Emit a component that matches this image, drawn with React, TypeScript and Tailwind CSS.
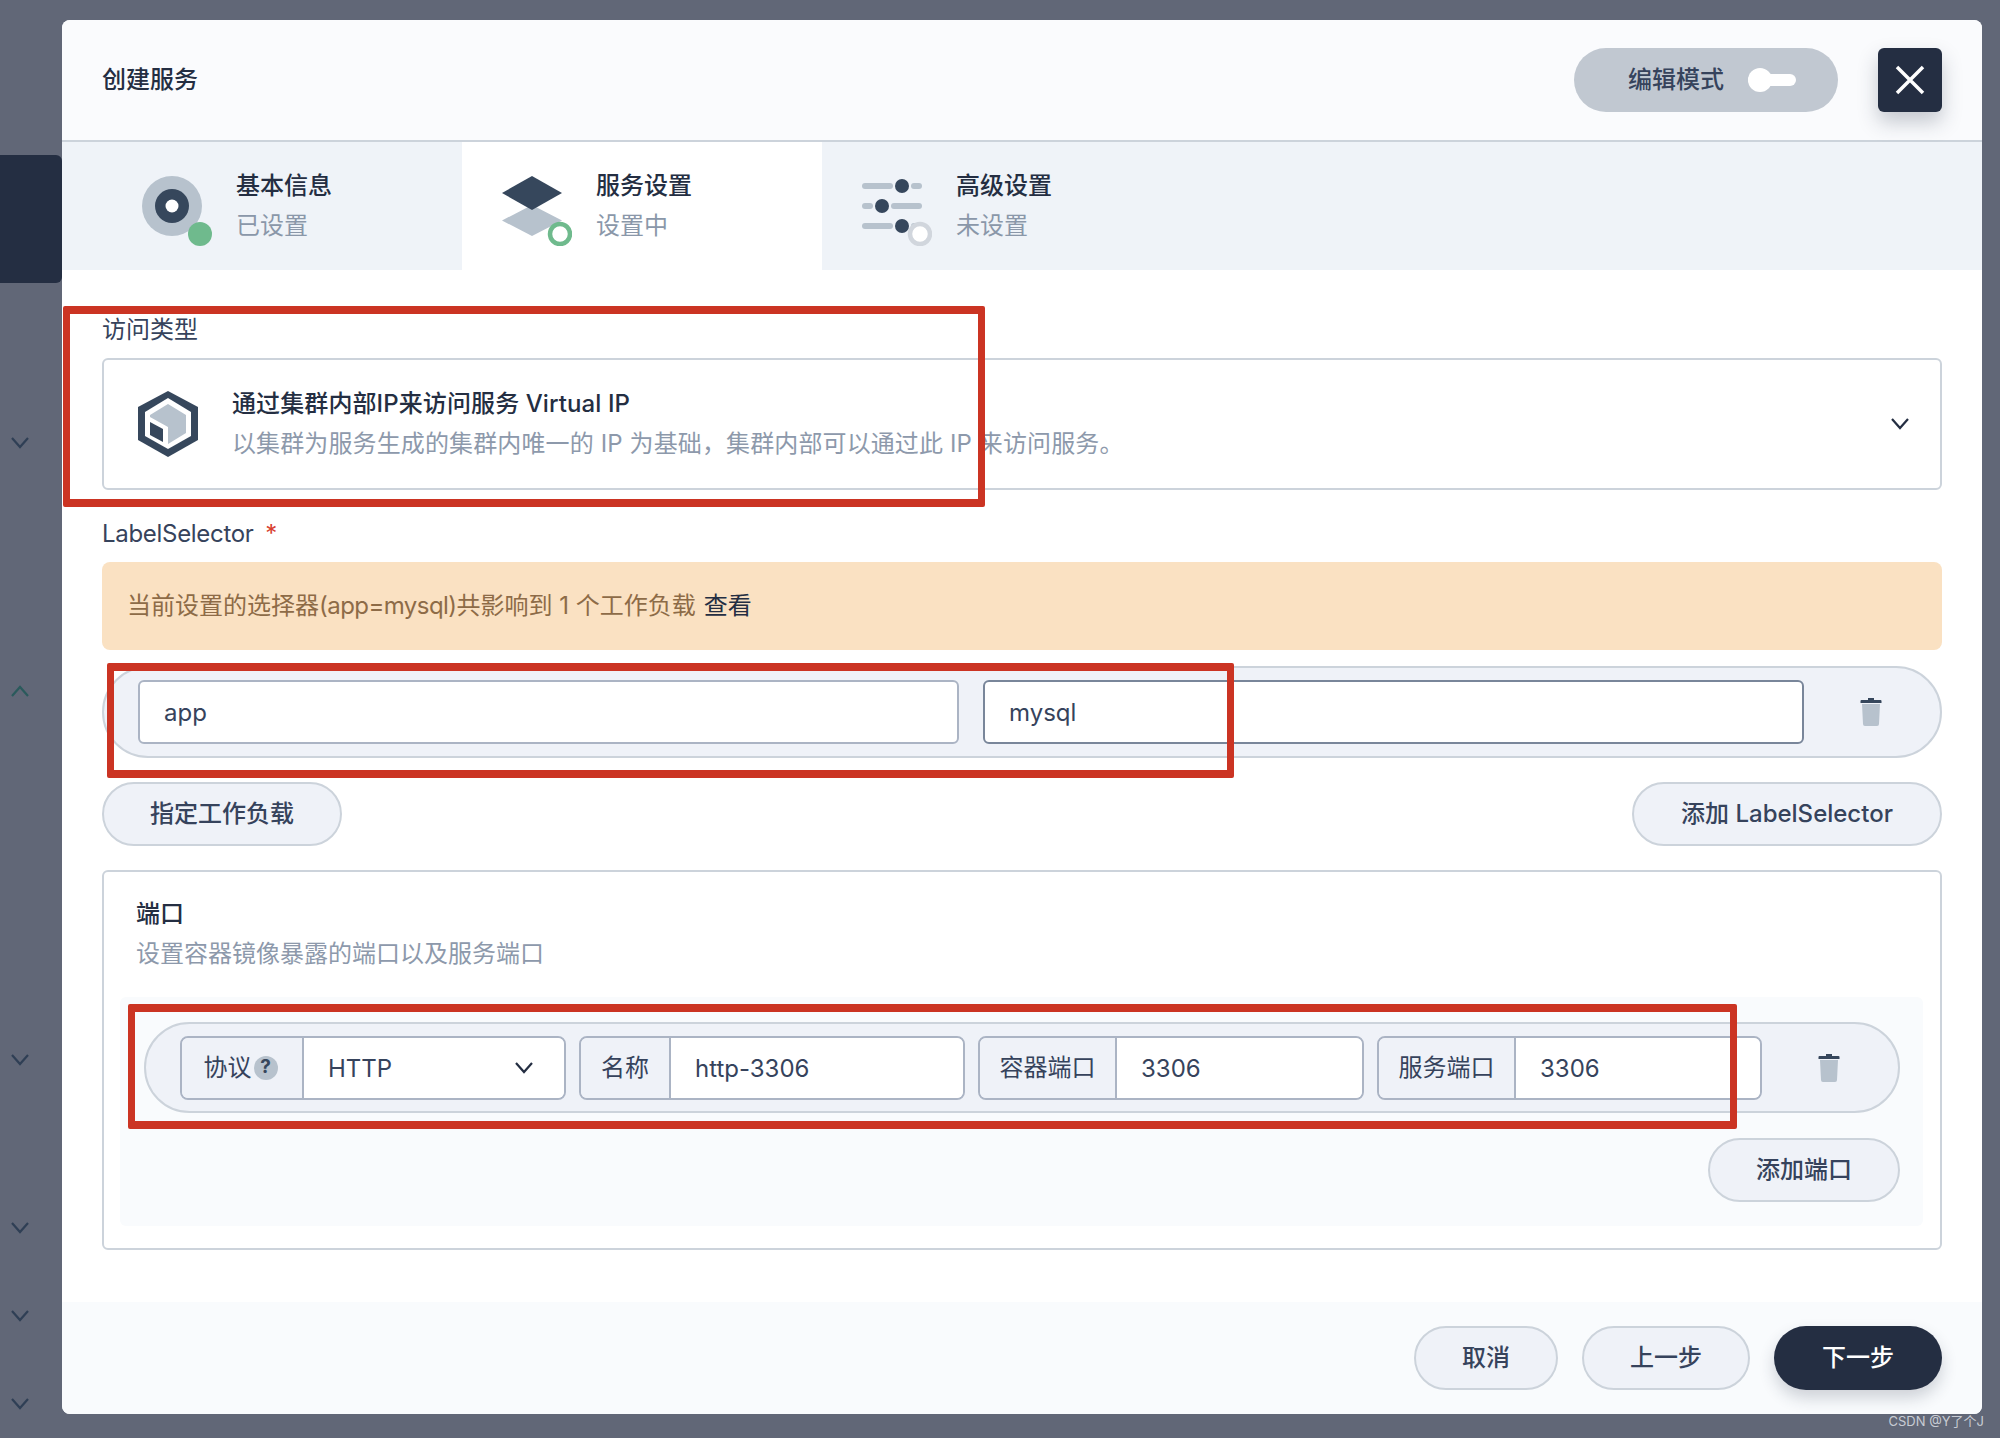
import React from "react";

const font = { fontFamily: '"Inter","Noto Sans CJK SC",sans-serif' };

function Chevron({ up = false, color = "#2f3f55", className = "" }: { up?: boolean; color?: string; className?: string }) {
  return (
    <svg width="20" height="12" viewBox="0 0 20 12" className={className} fill="none">
      <polyline points={up ? "2,11 10,2 18,11" : "2,1 10,10 18,1"} stroke={color} strokeWidth="2.2" />
    </svg>
  );
}

function Trash() {
  return (
    <svg width="24" height="28" viewBox="0 0 24 28">
      <path d="M9 0h6v2h6.5a1 1 0 0 1 1 1v2h-21V3a1 1 0 0 1 1-1H9z" fill="#36475c" />
      <path d="M3 6h18l-1 20a2 2 0 0 1-2 2H6a2 2 0 0 1-2-2z" fill="#b7c2cd" />
    </svg>
  );
}

function StepOne() {
  return (
    <svg width="70" height="70" viewBox="0 0 70 70" className="mr-[24px] mt-[10px] shrink-0">
      <circle cx="30" cy="30" r="30" fill="#b7c2cd" />
      <circle cx="30" cy="30" r="17" fill="#36475c" />
      <circle cx="30" cy="30" r="6.5" fill="#fff" />
      <circle cx="58" cy="58" r="12" fill="#6fba8d" />
    </svg>
  );
}

function StepTwo() {
  return (
    <svg width="70" height="70" viewBox="0 0 70 70" className="mr-[24px] mt-[10px] shrink-0">
      <polygon points="30,29 60,44.5 30,60 0,44.5" fill="#b7c2cd" />
      <polygon points="30,0 60,17 30,34 0,17" fill="#36475c" />
      <circle cx="58" cy="58" r="10" fill="#fff" stroke="#6fba8d" strokeWidth="4.5" />
    </svg>
  );
}

function StepThree() {
  return (
    <svg width="70" height="70" viewBox="0 0 70 70" className="mr-[24px] mt-[10px] shrink-0">
      <rect x="0" y="7" width="31" height="6" rx="3" fill="#b7c2cd" />
      <rect x="49" y="7" width="11" height="6" rx="3" fill="#b7c2cd" />
      <circle cx="40" cy="10" r="7" fill="#36475c" />
      <rect x="0" y="27" width="11" height="6" rx="3" fill="#b7c2cd" />
      <rect x="29" y="27" width="31" height="6" rx="3" fill="#b7c2cd" />
      <circle cx="20" cy="30" r="7" fill="#36475c" />
      <rect x="0" y="47" width="31" height="6" rx="3" fill="#b7c2cd" />
      <rect x="49" y="47" width="11" height="6" rx="3" fill="#b7c2cd" />
      <circle cx="40" cy="50" r="7" fill="#36475c" />
      <circle cx="58" cy="58" r="10" fill="#fff" stroke="#d1d6dd" strokeWidth="4.5" />
    </svg>
  );
}

function HexIcon() {
  return (
    <svg width="60" height="66" viewBox="0 0 60 66" className="shrink-0">
      <polygon points="30,0 60,16 60,49 30,66 0,49 0,16" fill="#36475c" />
      <polygon points="30,7 53,21 53,45 30,58 7,45 7,21" fill="#fff" />
      <polygon points="30,13 48,24 48,42 30,53 30,36 12,26 12,24" fill="#b7c2cd" />
      <polygon points="12,31 25,38 25,51 12,44" fill="#36475c" />
    </svg>
  );
}

function Step({ icon, title, sub, active, wide }: { icon: React.ReactNode; title: string; sub: string; active?: boolean; wide?: boolean }) {
  return (
    <div className={`h-full flex items-center ${wide ? "w-[400px] pl-[80px]" : "w-[360px] pl-[40px]"} ${active ? "bg-white" : ""}`}>
      {icon}
      <div className="pb-[2px]">
        <div className="text-[24px] leading-[42px] font-medium text-[#242e42]">{title}</div>
        <div className="text-[24px] leading-[38px] text-[#8a97a9]">{sub}</div>
      </div>
    </div>
  );
}

function Btn({ w, children, primary }: { w: string; children: React.ReactNode; primary?: boolean }) {
  return (
    <div
      className={`${w} h-[64px] rounded-[32px] flex items-center justify-center text-[24px] font-medium ${
        primary
          ? "bg-[#242e42] text-white shadow-[0_8px_16px_rgba(36,46,66,0.2)]"
          : "bg-[#eff2f8] border-2 border-[#ccd3db] text-[#36435c]"
      }`}
    >
      {children}
    </div>
  );
}

function Group({ w, labelW, label, value, select }: { w: string; labelW: string; label: React.ReactNode; value: string; select?: boolean }) {
  return (
    <div className={`${w} h-[64px] flex border-2 border-[#abb4c4] rounded-[8px] overflow-hidden shrink-0`}>
      <div className={`${labelW} shrink-0 bg-[#eff2f8] border-r-2 border-[#abb4c4] flex items-center justify-center text-[24px] text-[#36435c]`}>
        {label}
      </div>
      <div className="flex-1 bg-white flex items-center justify-between pl-[24px] pr-[30px] text-[24px] text-[#36435c]">
        <span className="pt-[2px]">{value}</span>
        {select && <Chevron color="#242e42" />}
      </div>
    </div>
  );
}

export default function App() {
  return (
    <div className="relative w-[2000px] h-[1438px] overflow-hidden flex bg-[#616777]" style={font}>
      <aside className="w-[62px] shrink-0 flex flex-col">
        <div className="mt-[155px] h-[128px] bg-[#242e42] rounded-r-[6px]" />
        <Chevron className="ml-[10px] mt-[154px]" />
        <Chevron up color="#2a5a5c" className="ml-[10px] mt-[236px]" />
        <Chevron className="ml-[10px] mt-[357px]" />
        <Chevron className="ml-[10px] mt-[156px]" />
        <Chevron className="ml-[10px] mt-[76px]" />
        <Chevron className="ml-[10px] mt-[76px]" />
      </aside>

      <main className="w-[1920px] h-[1394px] mt-[20px] rounded-[8px] overflow-hidden bg-white flex flex-col">
        <header className="h-[122px] shrink-0 border-b-2 border-[#ccd3db] bg-[#fafbfd] flex items-center justify-between pl-[40px] pr-[40px]">
          <div className="text-[24px] font-medium text-[#242e42]">创建服务</div>
          <div className="flex items-center gap-[40px]">
            <div className="w-[264px] h-[64px] rounded-[32px] bg-[#c1c8d1] flex items-center pl-[54px] text-[24px] font-medium text-[#36435c]">
              编辑模式
              <div className="relative ml-[24px] w-[48px] h-[24px] flex items-center">
                <div className="w-full h-[12px] bg-white rounded-full" />
                <div className="absolute left-0 top-0 w-[24px] h-[24px] rounded-full bg-white" />
              </div>
            </div>
            <div className="w-[64px] h-[64px] rounded-[6px] bg-[#242e42] flex items-center justify-center shadow-[0_10px_20px_rgba(36,46,66,0.25)]">
              <svg width="30" height="30" viewBox="0 0 30 30">
                <path d="M2 2L28 28M28 2L2 28" stroke="#fff" strokeWidth="3.5" />
              </svg>
            </div>
          </div>
        </header>

        <nav className="h-[128px] shrink-0 bg-[#eff3f8] flex">
          <Step wide icon={<StepOne />} title="基本信息" sub="已设置" />
          <Step active icon={<StepTwo />} title="服务设置" sub="设置中" />
          <Step icon={<StepThree />} title="高级设置" sub="未设置" />
        </nav>

        <section className="flex-1 px-[40px] pt-[44px] text-[#36435c]">
          <div className="text-[24px] leading-[32px]">访问类型</div>
          <div className="mt-[12px] h-[132px] border-2 border-[#ccd3db] rounded-[6px] flex items-center pl-[34px] pr-[30px]">
            <HexIcon />
            <div className="ml-[34px] flex-1">
              <div className="text-[24px] leading-[40px] font-medium tracking-[0.1px] text-[#242e42]">通过集群内部IP来访问服务 Virtual IP</div>
              <div className="text-[24px] leading-[40px] tracking-[0.12px] text-[#8d99ab]">以集群为服务生成的集群内唯一的 IP 为基础，集群内部可以通过此 IP 来访问服务。</div>
            </div>
            <Chevron color="#242e42" />
          </div>

          <div className="mt-[28px] text-[24px] leading-[32px]">
            <span className="tracking-[-0.3px]">LabelSelector</span> <span className="ml-[5px] text-[#d8402f]">*</span>
          </div>
          <div className="mt-[12px] h-[88px] rounded-[8px] bg-[#fae1c2] flex items-center pl-[25px] text-[24px] text-[#8d6b47]">
            当前设置的选择器<span className="tracking-[-0.55px]">(app=mysql)</span>共影响到 1 个工作负载
            <span className="ml-[8px] text-[#242e42]">查看</span>
          </div>

          <div className="mt-[16px] h-[92px] rounded-[46px] bg-[#eff2f8] border-2 border-[#ccd3db] flex items-center pl-[34px] pr-0">
            <div className="w-[821px] h-[64px] border-2 border-[#abb4c4] rounded-[6px] bg-white flex items-center pl-[24px] pt-[2px] text-[24px]">app</div>
            <div className="ml-[24px] w-[821px] h-[64px] border-2 border-[#79869a] rounded-[6px] bg-white flex items-center pl-[24px] pt-[2px] text-[24px]">mysql</div>
            <div className="flex-1 flex justify-center pr-[2px]"><Trash /></div>
          </div>

          <div className="mt-[24px] flex justify-between">
            <Btn w="w-[240px]">指定工作负载</Btn>
            <Btn w="w-[310px]">添加 LabelSelector</Btn>
          </div>

          <div className="mt-[24px] h-[380px] border-2 border-[#ccd3db] rounded-[6px] pt-[26px]">
            <div className="pl-[32px] text-[24px] leading-[32px] font-medium text-[#242e42]">端口</div>
            <div className="pl-[32px] mt-[8px] text-[24px] leading-[32px] text-[#8d99ab]">设置容器镜像暴露的端口以及服务端口</div>
            <div className="mt-[27px] ml-[16px] mr-[17px] h-[229px] rounded-[6px] bg-[#f9fbfd] pt-[25px] pl-[24px] pr-[23px]">
              <div className="h-[91px] rounded-[46px] bg-[#eff2f8] border-2 border-[#ccd3db] flex items-center pl-[34px] gap-[13px]">
                <Group
                  w="w-[386px]"
                  labelW="w-[122px]"
                  select
                  value="HTTP"
                  label={
                    <span className="flex items-center pr-[3px]">
                      协议
                      <span className="ml-[2px] w-[24px] h-[24px] shrink-0 rounded-full bg-[#b7c2cd] text-[#36475c] text-[19px] font-bold flex items-center justify-center">?</span>
                    </span>
                  }
                />
                <Group w="w-[386px]" labelW="w-[90px]" label="名称" value="http-3306" />
                <Group w="w-[386px]" labelW="w-[137px]" label="容器端口" value="3306" />
                <Group w="w-[385px]" labelW="w-[137px]" label="服务端口" value="3306" />
                <div className="flex-1 flex justify-center pr-[16px]"><Trash /></div>
              </div>
              <div className="mt-[25px] flex justify-end">
                <Btn w="w-[192px]">添加端口</Btn>
              </div>
            </div>
          </div>
        </section>

        <footer className="h-[112px] shrink-0 bg-[#f9fbfd] flex items-center justify-end gap-[24px] pr-[40px]">
          <Btn w="w-[144px]">取消</Btn>
          <Btn w="w-[168px]">上一步</Btn>
          <Btn w="w-[168px]" primary>下一步</Btn>
        </footer>
      </main>

      <div className="absolute left-[63px] top-[306px] w-[922px] h-[201px] border-y-[8px] border-x-[7px] border-[#cb3423] rounded-[2px]" />
      <div className="absolute left-[107px] top-[663px] w-[1127px] h-[115px] border-y-[8px] border-x-[7px] border-[#cb3423] rounded-[2px]" />
      <div className="absolute left-[128px] top-[1004px] w-[1609px] h-[125px] border-y-[8px] border-x-[7px] border-[#cb3423] rounded-[2px]" />
      <div className="absolute right-[16px] top-[1412px] text-[13px] text-[#c8ccd4]">CSDN @Y了个J</div>
    </div>
  );
}
